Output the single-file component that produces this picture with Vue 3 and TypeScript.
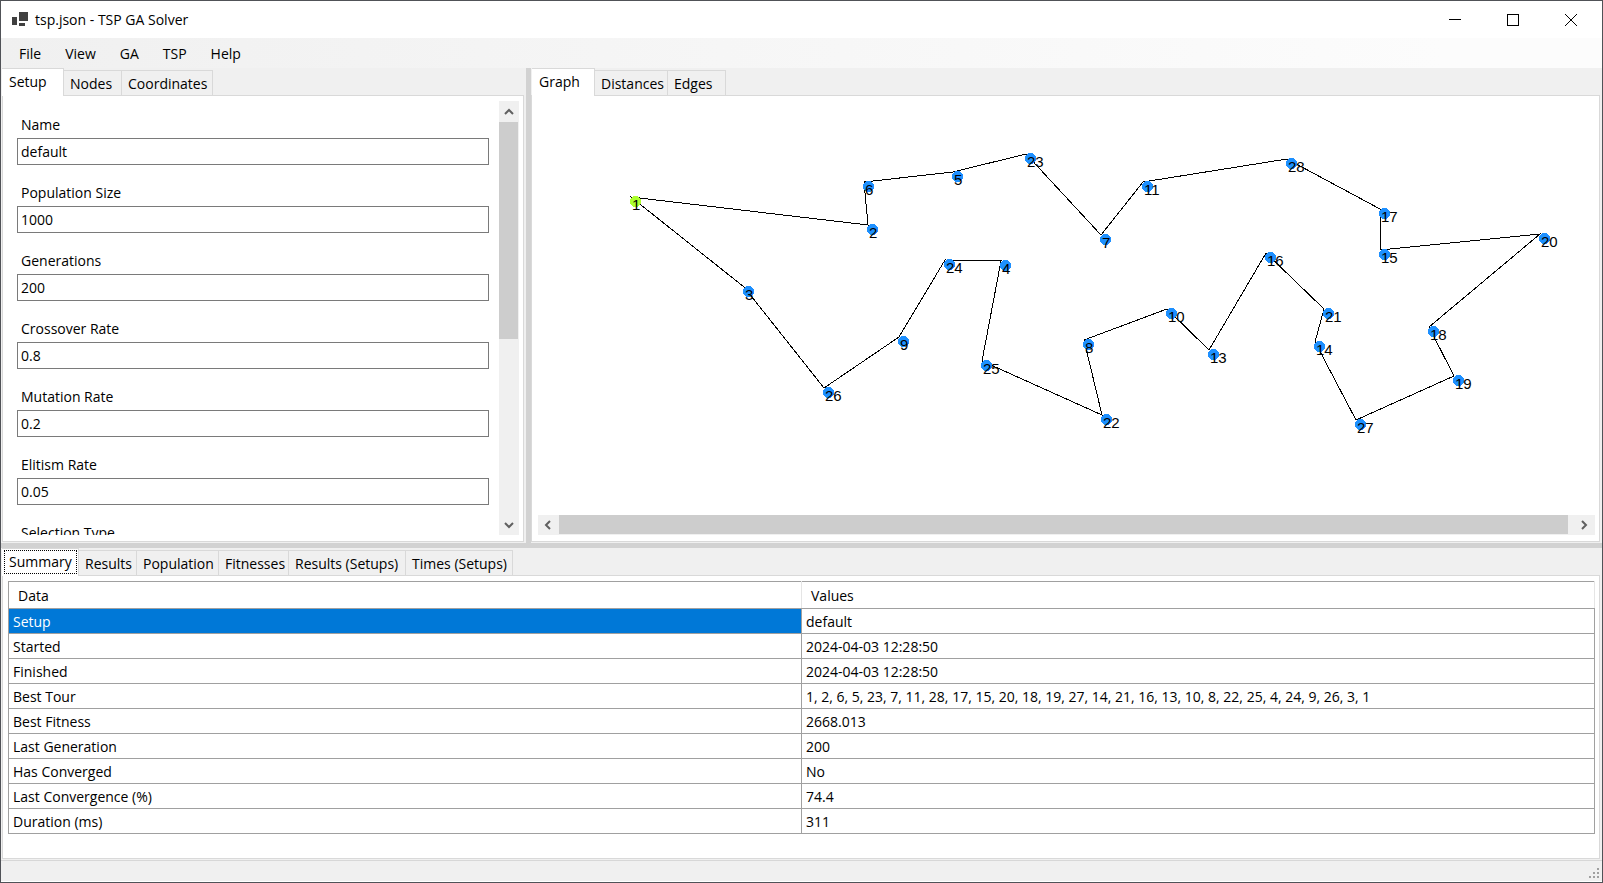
<script setup lang="ts">
import { ref } from 'vue'

interface GraphNode { id: number; x: number; y: number }

const menus = ['File', 'View', 'GA', 'TSP', 'Help']
const setupTabs = ['Setup', 'Nodes', 'Coordinates']
const graphTabs = ['Graph', 'Distances', 'Edges']
const resultTabs = ['Summary', 'Results', 'Population', 'Fitnesses', 'Results (Setups)', 'Times (Setups)']

const fields = ref([
  { id: 'name', label: 'Name', value: 'default' },
  { id: 'population', label: 'Population Size', value: '1000' },
  { id: 'generations', label: 'Generations', value: '200' },
  { id: 'crossover', label: 'Crossover Rate', value: '0.8' },
  { id: 'mutation', label: 'Mutation Rate', value: '0.2' },
  { id: 'elitism', label: 'Elitism Rate', value: '0.05' },
])

// Nodes in tour order; x and y are the centre of each marker.
const nodes: GraphNode[] = [
  { id: 1, x: 98, y: 101 },
  { id: 2, x: 335, y: 129 },
  { id: 6, x: 331, y: 86 },
  { id: 5, x: 420, y: 76 },
  { id: 23, x: 493, y: 58 },
  { id: 7, x: 568, y: 139 },
  { id: 11, x: 610, y: 86 },
  { id: 28, x: 754, y: 63 },
  { id: 17, x: 847, y: 113 },
  { id: 15, x: 847, y: 154 },
  { id: 20, x: 1007, y: 138 },
  { id: 18, x: 896, y: 231 },
  { id: 19, x: 921, y: 280 },
  { id: 27, x: 823, y: 324 },
  { id: 14, x: 782, y: 246 },
  { id: 21, x: 791, y: 213 },
  { id: 16, x: 733, y: 157 },
  { id: 13, x: 676, y: 254 },
  { id: 10, x: 634, y: 213 },
  { id: 8, x: 551, y: 244 },
  { id: 22, x: 569, y: 319 },
  { id: 25, x: 449, y: 265 },
  { id: 4, x: 468, y: 165 },
  { id: 24, x: 412, y: 164 },
  { id: 9, x: 366, y: 241 },
  { id: 26, x: 291, y: 292 },
  { id: 3, x: 211, y: 191 },
]

const tour = nodes.map((n) => `${n.x - 5},${n.y - 5}`).join(' ')
const bestTour = [...nodes.map((n) => n.id), 1].join(', ')

const rows = [
  ['Setup', 'default'],
  ['Started', '2024-04-03 12:28:50'],
  ['Finished', '2024-04-03 12:28:50'],
  ['Best Tour', bestTour],
  ['Best Fitness', '2668.013'],
  ['Last Generation', '200'],
  ['Has Converged', 'No'],
  ['Last Convergence (%)', '74.4'],
  ['Duration (ms)', '311'],
]
</script>

<template>
  <div class="window">
    <header class="titlebar">
      <svg class="app-icon" width="16" height="16" viewBox="0 0 16 16" aria-hidden="true">
        <rect x="0" y="5" width="5" height="8" />
        <rect x="7" y="0" width="9" height="9" />
        <rect x="7" y="11" width="6" height="3" />
      </svg>
      <h1>tsp.json - TSP GA Solver</h1>
      <div class="window-buttons">
        <button type="button" aria-label="Minimize">
          <svg width="12" height="12"><path d="M0 5.5H12" /></svg>
        </button>
        <button type="button" aria-label="Maximize">
          <svg width="12" height="12"><path d="M.5 .5H11.5V11.5H.5Z" /></svg>
        </button>
        <button type="button" aria-label="Close">
          <svg width="12" height="12"><path class="diagonal" d="M0 0L12 12M12 0L0 12" /></svg>
        </button>
      </div>
    </header>

    <nav class="menubar">
      <button v-for="m in menus" :key="m" type="button">{{ m }}</button>
    </nav>

    <main class="workspace">
      <section class="pane">
        <div class="tabs setup-tabs" role="tablist">
          <button v-for="(t, i) in setupTabs" :key="t" type="button" role="tab" class="tab" :class="{ active: i === 0 }" :aria-selected="i === 0">{{ t }}</button>
        </div>
        <div class="panel setup-panel">
          <form class="form">
            <div v-for="f in fields" :key="f.id" class="field">
              <label :for="f.id">{{ f.label }}</label>
              <input :id="f.id" v-model="f.value" type="text" />
            </div>
            <div class="field">
              <label for="selection">Selection Type</label>
              <select id="selection"></select>
            </div>
          </form>
          <div class="scroll vertical">
            <button type="button" aria-label="Scroll up">
              <svg width="10" height="7"><path d="M1 6L5 2L9 6" /></svg>
            </button>
            <div class="track"><div class="thumb"></div></div>
            <button type="button" aria-label="Scroll down">
              <svg width="10" height="7"><path d="M1 1L5 5L9 1" /></svg>
            </button>
          </div>
        </div>
      </section>

      <div class="splitter"></div>

      <section class="pane">
        <div class="tabs graph-tabs" role="tablist">
          <button v-for="(t, i) in graphTabs" :key="t" type="button" role="tab" class="tab" :class="{ active: i === 0 }" :aria-selected="i === 0">{{ t }}</button>
        </div>
        <div class="panel graph-panel">
          <div class="graph">
            <svg width="100%" height="100%" role="img" aria-label="Best tour">
              <polygon class="tour" :points="tour" />
              <g v-for="n in nodes" :key="n.id">
                <circle :cx="n.x - 0.5" :cy="n.y - 0.5" r="5.5" :class="n.id === 1 ? 'start' : 'stop'" />
                <text :x="n.x - 4" :y="n.y + 8">{{ n.id }}</text>
              </g>
            </svg>
          </div>
          <div class="scroll horizontal">
            <button type="button" aria-label="Scroll left">
              <svg width="7" height="10"><path d="M6 1L2 5L6 9" /></svg>
            </button>
            <div class="track"><div class="thumb"></div></div>
            <button type="button" aria-label="Scroll right">
              <svg width="7" height="10"><path d="M1 1L5 5L1 9" /></svg>
            </button>
          </div>
        </div>
      </section>
    </main>

    <div class="splitter"></div>

    <section class="pane results">
      <div class="tabs result-tabs" role="tablist">
        <button v-for="(t, i) in resultTabs" :key="t" type="button" role="tab" class="tab" :class="{ active: i === 0, focused: i === 0 }" :aria-selected="i === 0">{{ t }}</button>
      </div>
      <div class="panel results-panel">
        <table>
          <thead>
            <tr><th scope="col">Data</th><th scope="col">Values</th></tr>
          </thead>
          <tbody>
            <tr v-for="(r, i) in rows" :key="r[0]">
              <td :class="{ selected: i === 0 }">{{ r[0] }}</td>
              <td>{{ r[1] }}</td>
            </tr>
          </tbody>
        </table>
      </div>
    </section>

    <footer class="statusbar">
      <svg width="11" height="11" aria-hidden="true">
        <path d="M8 0h2v2h-2zM4 4h2v2h-2zM8 4h2v2h-2zM0 8h2v2h-2zM4 8h2v2h-2zM8 8h2v2h-2z" />
      </svg>
    </footer>
  </div>
</template>

<style>
body {
  margin: 0;
}
</style>

<style scoped>
* {
  box-sizing: border-box;
}

.window {
  display: flex;
  flex-direction: column;
  height: 100vh;
  border: 1px solid #505257;
  background: #f0f0f0;
  color: #000;
  font-family: "Open Sans", "Noto Sans", sans-serif;
  font-size: 14px;
  line-height: 20px;
  overflow: hidden;
}

button,
input,
select {
  margin: 0;
  padding: 0;
  border: 0;
  border-radius: 0;
  background: none;
  color: inherit;
  font: inherit;
}

.titlebar {
  display: flex;
  flex: none;
  align-items: center;
  height: 37px;
  padding: 0 2px 0 11px;
  background: #fff;
}

.app-icon {
  fill: #404040;
}

h1 {
  margin: 0 auto 0 7px;
  font-size: 14px;
  font-weight: 400;
}

.window-buttons {
  display: flex;
}

.window-buttons button {
  display: flex;
  align-items: center;
  justify-content: center;
  width: 58px;
  height: 37px;
}

.window-buttons path {
  fill: none;
  stroke: #000;
  shape-rendering: crispEdges;
}

.window-buttons .diagonal {
  shape-rendering: auto;
}

.menubar {
  display: flex;
  flex: none;
  gap: 24px;
  height: 30px;
  padding: 2px 0 0 18px;
  background: linear-gradient(to right, #f0f0f0, #fcfcfc 90%);
}

.workspace {
  display: grid;
  flex: 475 1 0;
  grid-template-columns: 525fr 5px 1071fr;
  min-height: 0;
}

.splitter {
  flex: none;
  min-height: 5px;
  background: #d2d2d2;
}

.pane {
  display: flex;
  flex-direction: column;
  min-width: 0;
  min-height: 0;
}

.results {
  flex: 312 1 0;
}

.tabs {
  display: grid;
  flex: none;
  align-items: end;
  height: 27px;
  padding-left: 1px;
}

.setup-tabs {
  grid-template-columns: 62px 58px 91px;
}

.graph-tabs {
  grid-template-columns: 63px 73px 58px;
}

.result-tabs {
  grid-template-columns: 77px 58px 82px 70px 117px 107px;
}

.tab {
  height: 25px;
  padding: 2px 0 0 6px;
  border: 1px solid #d9d9d9;
  border-left: 0;
  border-bottom: 0;
  text-align: left;
  white-space: nowrap;
}

.tab.active {
  z-index: 1;
  height: 28px;
  margin-bottom: -1px;
  padding: 0 0 2px 7px;
  background: #fff;
}

.tab.active.focused {
  outline: 1px dotted #000;
  outline-offset: -3px;
}

.panel {
  flex: 1;
  min-height: 0;
  margin: 0 2px 1px 1px;
  border: 1px solid #d9d9d9;
  background: #fff;
}

.setup-panel {
  display: flex;
  padding: 5px 4px 6px 5px;
}

.form {
  flex: 1;
  padding: 14px 10px 0 9px;
  overflow: hidden;
}

.field {
  display: flex;
  flex-direction: column;
  gap: 3px;
  margin-bottom: 18px;
}

.field label {
  padding-left: 4px;
}

.field input,
.field select {
  width: 100%;
  height: 27px;
  padding: 0 3px;
  border: 1px solid #7a7a7a;
  background: #fff;
}

.scroll {
  display: flex;
  flex: none;
  background: #f0f0f0;
}

.scroll button {
  display: flex;
  flex: none;
  align-items: center;
  justify-content: center;
  width: 19px;
  height: 20px;
}

.scroll path {
  fill: none;
  stroke: #606060;
  stroke-width: 2;
}

.track {
  flex: 1;
}

.thumb {
  background: #cdcdcd;
}

.vertical {
  flex-direction: column;
  width: 20px;
}

.vertical .thumb {
  width: 19px;
  height: 55%;
  margin-top: 1px;
}

.graph-panel {
  display: flex;
  flex-direction: column;
  margin-left: 0;
  padding: 5px 4px 6px 6px;
}

.graph {
  flex: 1;
  min-height: 0;
  overflow: hidden;
}

.graph svg {
  display: block;
}

.tour {
  fill: none;
  stroke: #000;
  shape-rendering: crispEdges;
}

.graph circle {
  shape-rendering: crispEdges;
}

.start {
  fill: #adff2f;
}

.stop {
  fill: #1e90ff;
}

.graph text {
  font-family: "Liberation Sans", Arial, sans-serif;
  font-size: 15px;
}

.horizontal {
  height: 20px;
}

.horizontal button:last-child {
  width: 27px;
  padding-left: 6px;
}

.horizontal .thumb {
  height: 19px;
  margin-left: 2px;
}

.results-panel {
  padding: 5px 4px 0 5px;
}

table {
  width: 100%;
  border-collapse: collapse;
  table-layout: fixed;
}

th,
td {
  height: 25px;
  padding: 2px 4px 0;
  border: 1px solid #a0a0a0;
  text-align: left;
}

th {
  height: 27px;
  padding: 2px 9px 0;
  border-right-color: #e5e5e5;
  font-weight: 400;
}

.selected {
  background: #0078d7;
  color: #fff;
}

.statusbar {
  display: flex;
  flex: none;
  align-items: flex-end;
  justify-content: flex-end;
  height: 22px;
  padding: 0 2px 2px 0;
  border-top: 1px solid #d7d7d7;
  border-bottom: 1px solid #fff;
}

.statusbar path {
  fill: #a0a0a0;
}
</style>
